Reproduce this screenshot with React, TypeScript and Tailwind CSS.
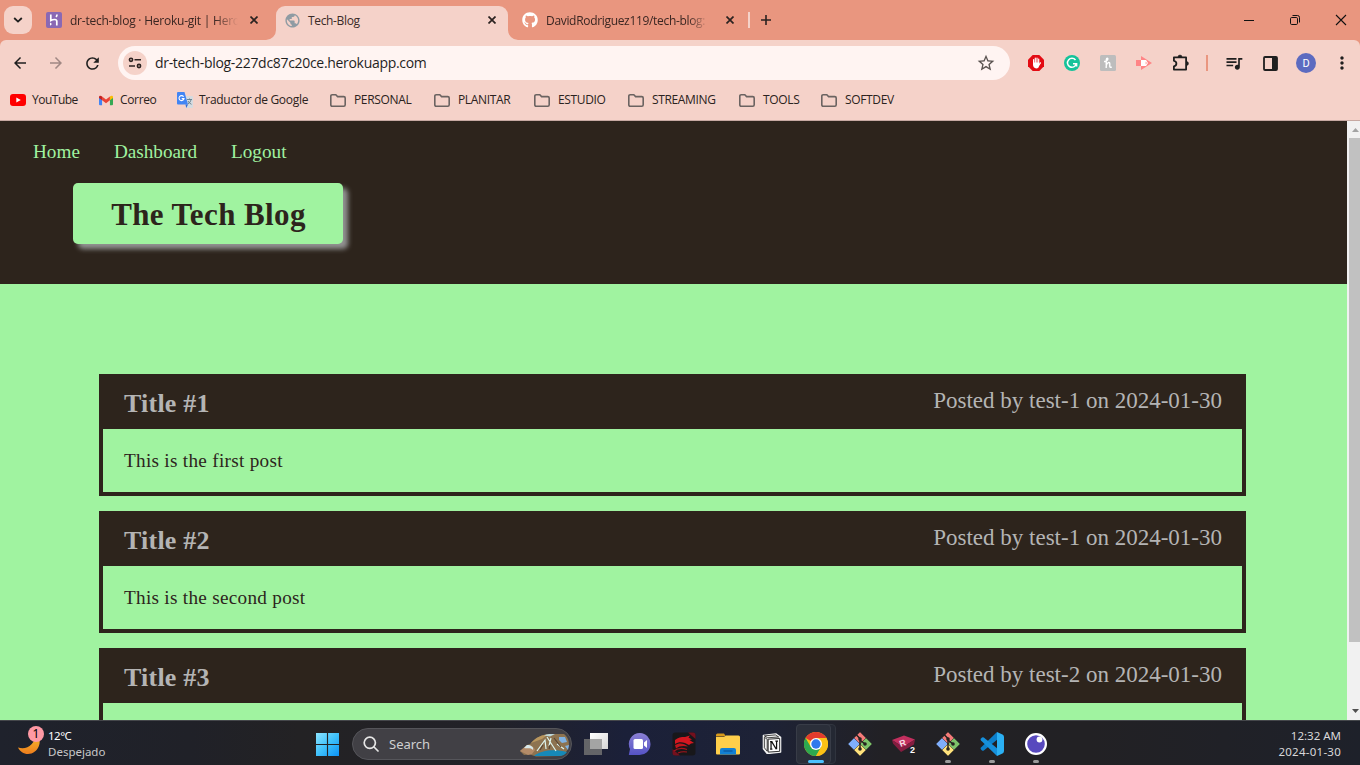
import type { ReactNode } from 'react';
import {
  MdArrowBack,
  MdArrowForward,
  MdRefresh,
  MdStarBorder,
  MdQueueMusic,
  MdMoreVert,
  MdPublic,
} from 'react-icons/md';
import { FaGithub } from 'react-icons/fa';

const posts = [
  { title: 'Title #1', meta: 'Posted by test-1 on 2024-01-30', body: 'This is the first post' },
  { title: 'Title #2', meta: 'Posted by test-1 on 2024-01-30', body: 'This is the second post' },
  { title: 'Title #3', meta: 'Posted by test-2 on 2024-01-30', body: '' },
];

function CloseX() {
  return (
    <svg width="8" height="8" viewBox="0 0 8 8" className="shrink-0" stroke="#2b2220" strokeWidth="1.7">
      <path d="M.5.5l7 7M7.5.5l-7 7" />
    </svg>
  );
}

function TabStrip() {
  return (
    <div className="flex h-[40px] items-stretch bg-[#e9967f]">
      <div className="ml-1 mt-1.5 flex h-7 w-7 items-center justify-center rounded-[9px] bg-[#f5d2c9]">
        <svg width="10" height="6" viewBox="0 0 10 6" fill="none" stroke="#1f1f1f" strokeWidth="1.8">
          <path d="M1.2 1l3.8 3.6L8.8 1" />
        </svg>
      </div>
      <div className="ml-3.5 flex w-[230px] items-center">
        <svg width="16" height="16" viewBox="0 0 16 16" className="shrink-0">
          <rect width="16" height="16" rx="2" fill="#8a68b4" />
          <path d="M4.800 2.500v6c2.600-1.300 6-1.600 6 .8v4.200M11 2.500c0 1-.3 1.700-.9 2.500" fill="none" stroke="#fff" strokeWidth="1.700" />
          <path d="M4 10.500v3.300l2-1.700z" fill="#fff" />
        </svg>
        <span className="ml-2 w-[168px] overflow-hidden whitespace-nowrap pt-[2px] text-[12px] tracking-[-0.23px] text-[#3a2622] [mask-image:linear-gradient(to_right,#000_86%,transparent)]">
          dr-tech-blog · Heroku-git | Heroku
        </span>
        <span className="ml-3 flex">
          <CloseX />
        </span>
      </div>
      <div className="relative mt-1.5 flex w-[232px] items-center rounded-t-[9px] bg-[#f5d2c9] pb-1.5 pl-2 pr-3">
        <svg width="10" height="10" className="absolute -left-[10px] bottom-0">
          <path d="M10 0v10H0A10 10 0 0 0 10 0z" fill="#f5d2c9" />
        </svg>
        <svg width="10" height="10" className="absolute -right-[10px] bottom-0">
          <path d="M0 0v10h10A10 10 0 0 1 0 0z" fill="#f5d2c9" />
        </svg>
        <MdPublic size={17} className="-ml-[0.5px] text-[#8f9ba3]" />
        <span className="ml-[7.5px] flex-1 pt-[2px] text-[12px] tracking-[-0.35px] text-[#3a2b28]">Tech-Blog</span>
        <CloseX />
      </div>
      <div className="ml-3.5 flex w-[226px] items-center">
        <FaGithub size={16} className="shrink-0 text-white" />
        <span className="ml-2 w-[162px] overflow-hidden whitespace-nowrap pt-[2px] text-[12px] tracking-[-0.32px] text-[#3a2622] [mask-image:linear-gradient(to_right,#000_88%,transparent)]">
          DavidRodriguez119/tech-blog: CMS
        </span>
        <span className="ml-[18px] flex">
          <CloseX />
        </span>
      </div>
      <div className="mt-3 h-4 w-[2px] bg-[#f5d2c9]" />
      <svg width="32" height="40" viewBox="0 0 32 40" stroke="#2b2220" strokeWidth="1.6">
        <path d="M11 20h10M16 15v10" />
      </svg>
      <div className="flex-1" />
      <svg width="46" height="40" viewBox="0 0 46 40" stroke="#111">
        <path d="M12 20.5h10" />
      </svg>
      <svg width="46" height="40" viewBox="0 0 46 40" fill="none" stroke="#111">
        <rect x="12.5" y="17.5" width="7" height="7" rx="1.2" />
        <path d="M14.5 15.5h5a2 2 0 0 1 2 2v5" />
      </svg>
      <svg width="36" height="40" viewBox="0 0 36 40" stroke="#111" strokeWidth="1.1">
        <path d="M12 15l10 10M22 15l-10 10" />
      </svg>
    </div>
  );
}

function Slot({ children }: { children: ReactNode }) {
  return <div className="flex w-9 shrink-0 items-center justify-center">{children}</div>;
}

function Toolbar() {
  return (
    <div className="bg-[#e9967f]">
      <div className="flex h-[40px] items-center rounded-t-[6px] bg-[#f5d2c9] pl-0.5 pt-1.5">
        <Slot><MdArrowBack size={18} className="text-[#1f1f1f]" /></Slot>
        <Slot><MdArrowForward size={18} className="text-[#a08884]" /></Slot>
        <Slot><MdRefresh size={19} className="text-[#1f1f1f]" /></Slot>
        <div className="ml-2 flex h-[34px] w-[892px] items-center rounded-full bg-[#fff4f2] pl-[5px] pr-[14px]">
          <div className="flex h-6 w-6 items-center justify-center rounded-full bg-[#f5d2c9]">
            <svg width="14" height="12" viewBox="0 0 14 12" fill="none" stroke="#2b2220" strokeWidth="1.6">
              <circle cx="3" cy="2.8" r="1.6" />
              <path d="M6.5 2.8H13M1 9h6" />
              <circle cx="11" cy="9" r="1.6" />
            </svg>
          </div>
          <span className="ml-2 flex-1 pb-px text-[14px] tracking-[-0.31px] text-[#1f1f1f]">dr-tech-blog-227dc87c20ce.herokuapp.com</span>
          <MdStarBorder size={20} className="text-[#5a5350]" />
        </div>
        <div className="ml-2 flex flex-1 items-center">
          <Slot>
            <svg width="16" height="16" viewBox="0 0 16 16">
              <path d="M4.7 0h6.600L16 4.700v6.600L11.300 16H4.700L0 11.300V4.700z" fill="#e30b13" />
              <path d="M5.600 8V4.600M7.300 8V3.200M9 8V3M10.700 8V4.200M11 10l1.500-2.200" stroke="#fff" strokeWidth="1.200" strokeLinecap="round" />
              <path d="M5 7.500h6.300v2.500c0 2-1.200 3.400-3 3.400-2.200 0-3.300-1.800-3.300-3.600z" fill="#fff" />
            </svg>
          </Slot>
          <Slot>
            <svg width="16" height="16" viewBox="0 0 16 16" fill="none" stroke="#fff" strokeWidth="1.500">
              <circle cx="8" cy="8" r="8" fill="#15c39a" stroke="none" />
              <path d="M11.500 5A4.500 4.500 0 1 0 12.300 9M9 8.800h3.600v2.600" />
            </svg>
          </Slot>
          <Slot>
            <svg width="16" height="16" viewBox="0 0 16 16" fill="none" stroke="#fff" strokeWidth="1.400">
              <rect width="16" height="16" rx="1.500" fill="#bdbdbd" stroke="none" />
              <path d="M4 6.500c3 .5 5-3 3.200-3.400C5.800 3 6.400 8 6.200 13M6.200 10.500c.8-3 3.600-4.200 3.600-1.600 0 1.800-.6 4.500 1.900 2.900" />
            </svg>
          </Slot>
          <Slot>
            <svg width="16" height="14" viewBox="0 0 16 14">
              <path d="M0 4h5v6H0zM5 0l11 7-11 7z" fill="#ff8586" />
              <path d="M5 4h5l2 3-2 3H5z" fill="#fff" />
              <path d="M9.500 5.500L11.500 7l-2 1.500z" fill="#ffb0b0" />
            </svg>
          </Slot>
          <Slot>
            <svg width="18" height="18" viewBox="0 0 18 18" className="ml-[2px]">
              <path d="M1.900 3.400h12.200v12.200H1.900v-3.300c3.300-.5 3.300-5 0-5.500z" fill="none" stroke="#1f1f1f" strokeWidth="1.800" strokeLinejoin="round" />
              <path d="M6 3a2 2 0 0 1 4 0zM14.500 7.500a2 2 0 0 1 0 4z" fill="#1f1f1f" stroke="#1f1f1f" strokeWidth=".5" />
            </svg>
          </Slot>
          <div className="flex w-[18px] justify-center"><div className="h-4 w-[2px] bg-[#e9967f]" /></div>
          <Slot><MdQueueMusic size={20} className="text-[#1f1f1f]" /></Slot>
          <Slot>
            <svg width="15" height="15" viewBox="0 0 15 15">
              <rect x="1" y="1" width="13" height="13" rx="1" fill="none" stroke="#1f1f1f" strokeWidth="1.8" />
              <path d="M9 1h5v13H9z" fill="#1f1f1f" />
            </svg>
          </Slot>
          <Slot>
            <div className="flex h-5 w-5 items-center justify-center rounded-full bg-[#5c6bc0] pt-px font-[Roboto] text-[11px] leading-none text-white">D</div>
          </Slot>
          <Slot><MdMoreVert size={20} className="text-[#1f1f1f]" /></Slot>
        </div>
      </div>
    </div>
  );
}

function Folder({ label, className }: { label: string; className: string }) {
  return (
    <div className={`flex items-center ${className}`}>
      <svg width="16" height="13" viewBox="0 0 16 13" fill="none" stroke="#6b6361" strokeWidth="1.6" className="shrink-0">
        <path d="M.8 2.200q0-1.400 1.400-1.400h3.600l1.800 1.800h6.200q1.400 0 1.400 1.400v6.800q0 1.400-1.400 1.400H2.200q-1.400 0-1.400-1.400z" />
      </svg>
      <span className="ml-2">{label}</span>
    </div>
  );
}

function Bookmarks() {
  return (
    <div className="flex h-[41px] items-center whitespace-nowrap border-b border-[#c7a9a2] bg-[#f5d2c9] text-[12px] tracking-[-0.35px] text-[#2b2220]">
      <div className="flex w-[88px] items-center pl-2.5">
        <svg width="16" height="12" viewBox="0 0 16 12">
          <rect width="16" height="12" rx="3" fill="#f00" />
          <path d="M6.300 3.400v5.200L10.800 6z" fill="#fff" />
        </svg>
        <span className="ml-1.5 tracking-[-0.5px]">YouTube</span>
      </div>
      <div className="flex w-[79px] items-center pl-[11px]">
        <svg width="14" height="11" viewBox="0 0 16 12">
          <path d="M0 1.500L3.500 4v7.500H1.200A1.200 1.200 0 0 1 0 10.300z" fill="#4285f4" />
          <path d="M16 1.500L12.500 4v7.500h2.300a1.200 1.200 0 0 0 1.200-1.200z" fill="#34a853" />
          <path d="M3.500 1.500L8 4.900l4.500-3.400v4.300L8 9.200 3.500 5.800z" fill="#ea4335" />
          <path d="M0 2.200C0 .2 2-.1 3.500 1.500v4.300L0 3.200z" fill="#c5221f" />
          <path d="M16 2.200c0-2-2-2.300-3.500-.7v4.300L16 3.200z" fill="#fbbc04" />
        </svg>
        <span className="ml-[7px]">Correo</span>
      </div>
      <div className="flex w-[163px] items-center pl-2.5">
        <svg width="16" height="16" viewBox="0 0 16 16">
          <path d="M6 4h9a1 1 0 0 1 1 1v10a1 1 0 0 1-1 1H9z" fill="#d5dbe0" />
          <path d="M1 0h6.500L11 12.500H1a1 1 0 0 1-1-1V1a1 1 0 0 1 1-1z" fill="#4285f4" />
          <path d="M8.500 12.500H11L9.300 16z" fill="#3367d6" />
          <path d="M6.600 4.700A2.500 2.500 0 1 0 7 6.600H4.700" fill="none" stroke="#fff" strokeWidth="1.100" />
          <path d="M10 7.500h5M12.500 6.500v1M14 7.500c-.3 2-1.500 3.500-3 4.500M11 9c.7 1.500 2 2.700 3.500 3.300" fill="none" stroke="#607d8b" strokeWidth=".9" />
        </svg>
        <span className="ml-1.5 tracking-[-0.3px]">Traductor de Google</span>
      </div>
      <Folder label="PERSONAL" className="w-[104px]" />
      <Folder label="PLANITAR" className="w-[100px]" />
      <Folder label="ESTUDIO" className="w-[94px]" />
      <Folder label="STREAMING" className="w-[111px]" />
      <Folder label="TOOLS" className="w-[82px]" />
      <Folder label="SOFTDEV" className="w-[100px]" />
    </div>
  );
}

function Page() {
  return (
    <div className="flex h-[599px] overflow-hidden">
      <main className="w-[1347px] bg-[#a0f3a0] font-['Liberation_Serif',serif]">
        <header className="h-[163px] bg-[#2d241c] pt-5">
          <nav className="flex h-[22px] items-center gap-[34px] pl-[33px] text-[19.2px] text-[#a0f3a0]">
            <a>Home</a>
            <a>Dashboard</a>
            <a>Logout</a>
          </nav>
          <h1 className="ml-[73px] mt-5 flex h-[61px] w-[270px] items-center justify-center rounded-[5px] bg-[#a0f3a0] pl-px pt-[3px] text-[31px] font-bold tracking-[0.4px] text-[#2d241c] shadow-[5px_5px_5px_#929292]">
            The Tech Blog
          </h1>
        </header>
        <section className="ml-[99px] mt-[90px] flex w-[1147px] flex-col gap-[15px]">
          {posts.map((p) => (
            <article key={p.title} className="h-[122px] shrink-0 border-4 border-[#2d241c]">
              <div className="flex h-[51px] justify-between bg-[#2d241c] pl-[21px] pr-5 text-[#b4b4b4]">
                <h2 className="pt-[11px] text-[26px] font-bold leading-[30px] tracking-[0.22px]">{p.title}</h2>
                <p className="pt-[9px] text-[23px] leading-[28px]">{p.meta}</p>
              </div>
              <p className="pl-[21px] pt-5 text-[19.2px] leading-[24px] tracking-[0.29px] text-[#2d241c]">{p.body}</p>
            </article>
          ))}
        </section>
      </main>
      <aside className="flex w-[13px] flex-col items-end bg-[#f1f1f1]">
        <svg width="11" height="17" viewBox="0 0 11 17"><path d="M3 11l3.500-4L10 11z" fill="#a3a3a3" /></svg>
        <div className="h-[504px] w-[11px] bg-[#c1c1c1]" />
        <div className="flex-1" />
        <svg width="11" height="17" viewBox="0 0 11 17"><path d="M3 6l3.500 4L10 6z" fill="#505050" /></svg>
      </aside>
    </div>
  );
}

function TaskCell({ children, running }: { children: ReactNode; running?: boolean }) {
  return (
    <div className="flex h-[44px] w-[44px] shrink-0 flex-col items-center justify-end">
      {children}
      <div className={running ? 'mb-[2px] mt-[4px] h-[3px] w-[6px] rounded-full bg-[#9b9b9b]' : 'mb-[2px] mt-[4px] h-[3px] w-[6px]'} />
    </div>
  );
}

function GitIcon() {
  return (
    <svg width="24" height="24" viewBox="0 0 24 24" stroke="#25221f" strokeWidth=".3">
      <path d="M12 0l6 6-6 6-6-6z" fill="#f47a78" />
      <path d="M6 6l6 6-6 6-6-6z" fill="#7faefb" />
      <path d="M18 6l6 6-6 6-6-6z" fill="#7dc36a" />
      <path d="M12 12l6 6-6 6-6-6z" fill="#ffe27c" />
      <path d="M8.500 3L12 6.500v11M12 8l5 4" fill="none" strokeWidth="1.500" />
      <g fill="#25221f" stroke="none"><circle cx="12" cy="7" r="1.800" /><circle cx="12" cy="17" r="1.800" /><circle cx="17" cy="12" r="1.800" /></g>
    </svg>
  );
}

function Taskbar() {
  return (
    <footer className="flex h-[45px] border-t border-[#45474b] bg-[linear-gradient(90deg,#1f222c_0%,#202128_14%,#232224_22%,#222228_36%,#1b2039_46%,#1d2236_56%,#222125_65%,#222124_80%,#1e212a_100%)] font-['Noto_Sans',sans-serif] text-white">
      <div className="flex w-[316px] pl-[17px]">
        <div className="relative mt-1 h-[32px] w-[28px]">
          <svg width="28" height="32" viewBox="0 0 28 32">
            <defs>
              <linearGradient id="moon" x1="0" y1="0" x2="0" y2="1">
                <stop stopColor="#f7c52d" />
                <stop offset="1" stopColor="#ee7d1d" />
              </linearGradient>
            </defs>
            <path d="M19 8c8 8 2 21-8 21-4.500 0-8-2.500-10-6.500C10 25 18 20 19 8z" fill="url(#moon)" />
          </svg>
          <div className="absolute left-[11px] top-[1px] flex h-4 w-4 items-center justify-center rounded-full bg-[#ff99a4] text-[12px] leading-none text-black">1</div>
        </div>
        <div className="ml-[3px] pt-[7px] text-[11.5px] leading-[16px]">
          <div className="tracking-[-0.5px]">12°C</div>
          <div className="text-[#c8c8c9]">Despejado</div>
        </div>
      </div>
      <svg width="23" height="23" viewBox="0 0 24 24" className="mt-3 self-start">
        <defs>
          <linearGradient id="win" x1="0" y1="0" x2="1" y2="1">
            <stop stopColor="#8ce4ff" />
            <stop offset=".5" stopColor="#3fc1fb" />
            <stop offset="1" stopColor="#0b92f5" />
          </linearGradient>
        </defs>
        <path d="M0 0h11.400v11.400H0zM12.600 0H24v11.400H12.600zM0 12.600h11.400V24H0zM12.600 12.600H24V24H12.600z" fill="url(#win)" />
      </svg>
      <div className="ml-[13px] mt-[7px] flex h-8 w-[220px] items-center rounded-full border border-[#55555a] bg-[#414045] pl-[10px] pr-[1px]">
        <svg width="16" height="16" viewBox="0 0 16 16" fill="none" stroke="#e6e6e6" strokeWidth="1.700">
          <circle cx="6.800" cy="6.800" r="5.600" />
          <path d="M11 11l4 4" strokeLinecap="round" />
        </svg>
        <span className="ml-2.5 flex-1 pt-px text-[13px] text-[#d0d0d1]">Search</span>
        <svg width="50" height="23" viewBox="0 0 50 23" className="mt-[3px]">
          <path d="M0 17l7-6 3-1C16 3 23 0 31 0h13c4 3 5 7 5 11-1 6-4 9-9 11l-24 .5-6-2-6 .5z" fill="#8d7350" />
          <path d="M0 17l7-6c4 0 7 2 8 5l-3 4-4 1z" fill="#b38b68" />
          <path d="M4 14l3-3c4 0 7 2 6 5-3-3-5-1-9-2z" fill="#d6e8ea" />
          <path d="M11 9C16 3 22 1 28 .5L22 5z" fill="#b9975f" />
          <path d="M24 1.500C27 0 31-.5 35 0l-5 2.500z" fill="#bcd8dc" />
          <path d="M14 22c7-6 21-7 33-4-2 2.500-4 4-8 4z" fill="#1689b8" />
          <path d="M39 3h6l2 5-5 1-3-3zM45 12l4-1-1 5z" fill="#7fb2e3" />
          <path d="M17 17l8-11 1 9M27 3l9 14M31 4l-2 8M37 10l7 5" fill="none" stroke="#def5ef" strokeWidth="1.200" />
          <path d="M20 16l3-5M29 15l1-4M34 4l7 9" fill="none" stroke="#594634" strokeWidth="1.200" />
        </svg>
      </div>
      <div className="ml-0.5 flex">
        <TaskCell>
          <svg width="24" height="24" viewBox="0 0 24 24">
            <defs><linearGradient id="tv" x1="0" y1="0" x2="1" y2="1"><stop stopColor="#fff" /><stop offset="1" stopColor="#d5d5d5" /></linearGradient></defs>
            <path d="M6 1h18v16H6z" fill="url(#tv)" />
            <path d="M0 7h18v16H0z" fill="#717171" opacity=".85" />
            <path d="M6 7h12v10H6z" fill="#a4a4a4" />
          </svg>
        </TaskCell>
        <TaskCell>
          <svg width="24" height="24" viewBox="0 0 24 24">
            <defs><linearGradient id="chat" x1="0" y1="0" x2="0" y2="1"><stop stopColor="#8b80d4" /><stop offset="1" stopColor="#5553c6" /></linearGradient></defs>
            <path d="M12 1a11 11 0 1 1-1 22H.8l1.200-6A11 11 0 0 1 12 1z" fill="url(#chat)" />
            <rect x="5.500" y="7" width="9.500" height="10" rx="1.500" fill="#fff" />
            <path d="M16 10.500L19 8v8l-3-2.500z" fill="#fff" />
          </svg>
        </TaskCell>
        <TaskCell>
          <svg width="24" height="24" viewBox="0 0 24 24">
            <rect x=".5" y=".5" width="23" height="23" rx="3" fill="#18171a" />
            <path d="M16 .5h5q2.500 0 2.500 2.500v4zM.5 17v4q0 2.500 2.500 2.500h5z" fill="#74101e" />
            <path d="M3 8c3-2.500 6-3 10-3l5-1.500-1.500 2L20 7.500l-2.500.5 4.500 3-3 .5-2 1.500-4-2c-4-1.500-7-1-10 1z" fill="#d51720" />
            <path d="M3 13c4-2.500 9-2 13 1.500-4-1-9-1-12 2z" fill="#c0151d" />
            <path d="M2 19c4-3 9-3 13-1.500M6 21c3-1.500 6-1.500 9-1" fill="none" stroke="#a8141c" strokeWidth="1.100" />
          </svg>
        </TaskCell>
        <TaskCell>
          <svg width="24" height="24" viewBox="0 0 24 24">
            <path d="M0 3q0-1.500 1.500-1.500H8l2 3H0z" fill="#d89a1b" />
            <path d="M0 5h8l2-1.500h12.500Q24 3.500 24 5v16.500q0 1-1 1H1q-1 0-1-1z" fill="#ffcf4b" />
            <path d="M4 22.500V18q0-2 2-2h12q2 0 2 2v4.500z" fill="#1280d4" />
            <path d="M7.500 19h9" stroke="#0c5da8" strokeWidth="1.500" />
          </svg>
        </TaskCell>
        <TaskCell>
          <svg width="20" height="21" viewBox="0 0 20 22" className="mb-[2px]">
            <path d="M1 2.500L14 1l5 3.500V20L5 21.500 1 16.500z" fill="#f3f3f3" stroke="#f3f3f3" strokeLinejoin="round" strokeWidth="1.500" />
            <path d="M2 3l11.500-1L17 4.200 5.500 5zM2 4.500l3 2v12.500l-3-3.500z" fill="#efefef" stroke="#111" strokeWidth=".8" />
            <path d="M6 6.500l12-.8v13.500l-12 .8z" fill="#fff" stroke="#111" strokeWidth=".9" />
            <path d="M8 9h2.500M9 9v8M8 17h2.400M9.700 9l4.800 8M14.800 8.500v8.500M13.500 8.500h2.800" fill="none" stroke="#111" strokeWidth="1.300" />
          </svg>
        </TaskCell>
        <div className="relative flex h-[44px] w-[44px] shrink-0 items-start pt-[3px]">
          <div className="ml-[2px] h-[40px] w-[40px] rounded-[4px] border border-[#30343e] bg-[#242833]" />
          <div className="absolute left-[2px] top-[3px] flex h-[40px] w-[35px] flex-col items-start rounded-[4px] border border-[#383c47] bg-[#2b2f3a] pl-[7px] pt-[7px]">
            <svg width="24" height="24" viewBox="0 0 24 24" className="shrink-0">
              <circle cx="12" cy="12" r="12" fill="#fbc116" />
              <path d="M12 12L1.600 6A12 12 0 0 1 22.400 6z" fill="#e33b2e" />
              <path d="M1.600 6A12 12 0 0 0 12 24l5.200-9H6.800z" fill="#2da94f" />
              <path d="M22.400 6A12 12 0 0 1 12 24l5.200-9L12 6z" fill="#fbc116" />
              <circle cx="12" cy="12" r="6" fill="#fff" />
              <circle cx="12" cy="12" r="4.700" fill="#3079ed" />
            </svg>
            <div className="ml-1 mt-[4px] h-[3px] w-4 rounded-full bg-[#4cc2ff]" />
          </div>
        </div>
        <TaskCell><GitIcon /></TaskCell>
        <TaskCell>
          <svg width="25" height="24" viewBox="0 0 25 24">
            <path d="M0 8L12 3.500l11 4L11 15z" fill="#c22f5e" />
            <path d="M0 8l11 7-2 5-8-8.500zM11 15l12-7.500-1 5L9 20z" fill="#851d40" />
            <text x="7" y="14" fontSize="9" fontWeight="700" fontFamily="Liberation Sans" fill="#f5dbe3" transform="rotate(-18 11 10)">R</text>
            <text x="18" y="21" fontSize="9" fontWeight="700" fontFamily="Liberation Sans" fill="#fff">2</text>
          </svg>
        </TaskCell>
        <TaskCell running><GitIcon /></TaskCell>
        <TaskCell running>
          <svg width="24" height="24" viewBox="0 0 24 24">
            <path d="M17 0L1 15.500q-1 1 0 2l1 1q1 .6 1.800 0L18 7z" fill="#0c7fcb" />
            <path d="M17 24L1 8.500q-1-1 0-2l1-1q1-.6 1.800 0L18 17z" fill="#1690dc" />
            <path d="M17 0l5.500 2.500Q24 3.200 24 5v14q0 1.800-1.500 2.500L17 24z" fill="#2bb0f3" />
          </svg>
        </TaskCell>
        <TaskCell running>
          <svg width="22" height="22" viewBox="0 0 22 22" className="mb-[1px]">
            <circle cx="11" cy="11" r="9.900" fill="#5849be" stroke="#fff" strokeWidth="2.200" />
            <circle cx="14.500" cy="6.500" r="2.900" fill="#fff" />
          </svg>
        </TaskCell>
      </div>
      <div className="ml-auto pr-[19px] pt-[7px] text-right text-[11.5px] leading-[16px] text-[#d8d8d9]">
        <div>12:32 AM</div>
        <div className="tracking-[0.25px]">2024-01-30</div>
      </div>
    </footer>
  );
}

export default function App() {
  return (
    <div className="h-[765px] w-[1360px] overflow-hidden font-['Open_Sans',sans-serif]">
      <TabStrip />
      <Toolbar />
      <Bookmarks />
      <Page />
      <Taskbar />
    </div>
  );
}
